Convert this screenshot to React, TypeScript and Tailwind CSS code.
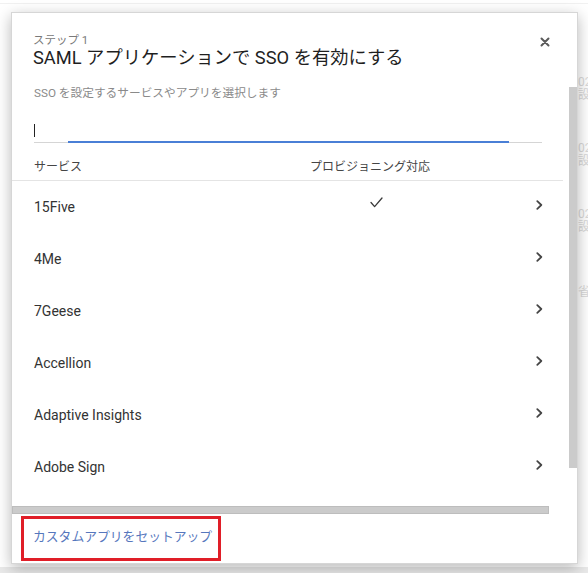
import React from 'react';

const apps = [
  { name: '15Five', provisioning: true },
  { name: '4Me', provisioning: false },
  { name: '7Geese', provisioning: false },
  { name: 'Accellion', provisioning: false },
  { name: 'Adaptive Insights', provisioning: false },
  { name: 'Adobe Sign', provisioning: false },
  { name: 'Adobe Creative Cloud', provisioning: false },
];

const font = { fontFamily: 'Roboto, "Noto Sans CJK JP", sans-serif' };

function Check() {
  return (
    <svg width="13" height="11" viewBox="0 0 13 11" fill="none">
      <path d="M1 5.5 L4.6 9.6 L12 1" stroke="#3a3a3a" strokeWidth="1.3" strokeLinecap="round" strokeLinejoin="round" />
    </svg>
  );
}

function Chevron() {
  return (
    <svg width="7" height="10" viewBox="0 0 7 10" fill="none">
      <path d="M1.3 1.2 L5.3 5 L1.3 8.8" stroke="#454545" strokeWidth="1.8" strokeLinecap="round" strokeLinejoin="round" />
    </svg>
  );
}

function Close() {
  return (
    <svg width="10" height="10" viewBox="0 0 10 10" fill="none">
      <path d="M1.5 1.5 L8.5 8.5 M8.5 1.5 L1.5 8.5" stroke="#5a5a5a" strokeWidth="2" strokeLinecap="round" />
    </svg>
  );
}

export default function App() {
  return (
    <div className="relative h-[573px] w-[588px] overflow-hidden bg-white" style={font}>
      {/* page behind the dialog, mostly hidden */}
      <div className="flex h-full flex-col">
        <div className="mt-[3px] h-px bg-[#f1f1f1]" />
        <div className="ml-[578px] flex flex-col text-[12px] leading-[13px] text-[#d9d9d9]">
          <div className="mt-[72px]">02</div>
          <div>設</div>
          <div className="mt-[40px]">02</div>
          <div>設</div>
          <div className="mt-[40px]">02</div>
          <div>設</div>
          <div className="mt-[52px]">省</div>
        </div>
        <div className="mt-auto h-[6px] bg-[#e9e9e9]" />
      </div>

      {/* dialog */}
      <div className="absolute left-[11px] top-[12px] flex h-[552px] w-[567px] flex-col border border-[#d6d6d6] bg-white shadow-[0_4px_14px_rgba(0,0,0,0.28)]">
        <div className="flex">
          <div className="flex w-[557px] flex-col">
            <div className="flex items-start justify-between pr-[19px] pt-[20px]">
              <div className="pl-[21px]">
                <div className="text-[11.5px] leading-[14px] text-[#7a7a7a]">ステップ 1</div>
                <div className="text-[18.3px] leading-[22px] text-[#1f1f1f]">SAML アプリケーションで SSO を有効にする</div>
              </div>
              <div className="pt-[4px]">
                <Close />
              </div>
            </div>
            <div className="mt-[16px] pl-[22px] text-[11.7px] leading-[16px] text-[#8a8a8a]">
              SSO を設定するサービスやアプリを選択します
            </div>
            <div className="ml-[22px] mr-[27px] mt-[11px] flex h-[31px] flex-col">
              <div className="flex flex-1 items-center">
                <div className="mt-[7px] h-[13px] w-px bg-[#222]" />
              </div>
              <div className="relative h-px bg-[#d5d5d5]">
                <div className="absolute -top-px left-[34px] h-[2px] w-[441px] bg-[#4a7fd6]" />
              </div>
            </div>
            <div className="mr-[6px] flex border-b border-[#e4e4e4] pb-[5px] pt-[16px] text-[12px] leading-[16px] text-[#454545]">
              <div className="w-[298px] pl-[22px]">サービス</div>
              <div>プロビジョニング対応</div>
            </div>
            <div className="h-[325px] overflow-hidden">
              {apps.map((app) => (
                <div key={app.name} className="flex h-[52px] items-center text-[14px] text-[#333]">
                  <div className="w-[358px] pl-[22px]">{app.name}</div>
                  <div className="flex w-[166px] -translate-y-[5px]">{app.provisioning && <Check />}</div>
                  <div className="-translate-y-[2px]">
                    <Chevron />
                  </div>
                </div>
              ))}
            </div>
            <div className="h-[8px] w-[537px] border border-[#bdbdbd] bg-[#cbcbcb]" />
          </div>
          <div className="flex w-[8px] flex-col">
            <div className="mt-[74px] h-[381px] bg-[#cbcbcb]" />
          </div>
        </div>
        <div className="flex flex-1 items-start pl-[9px] pt-[2px]">
          <div className="flex h-[45px] items-start border-[3px] border-[#e01e28] pl-[9px] pr-[6px] pt-[9px]">
            <span className="text-[12.8px] leading-[18px] text-[#5677bd]">カスタムアプリをセットアップ</span>
          </div>
        </div>
      </div>
    </div>
  );
}
